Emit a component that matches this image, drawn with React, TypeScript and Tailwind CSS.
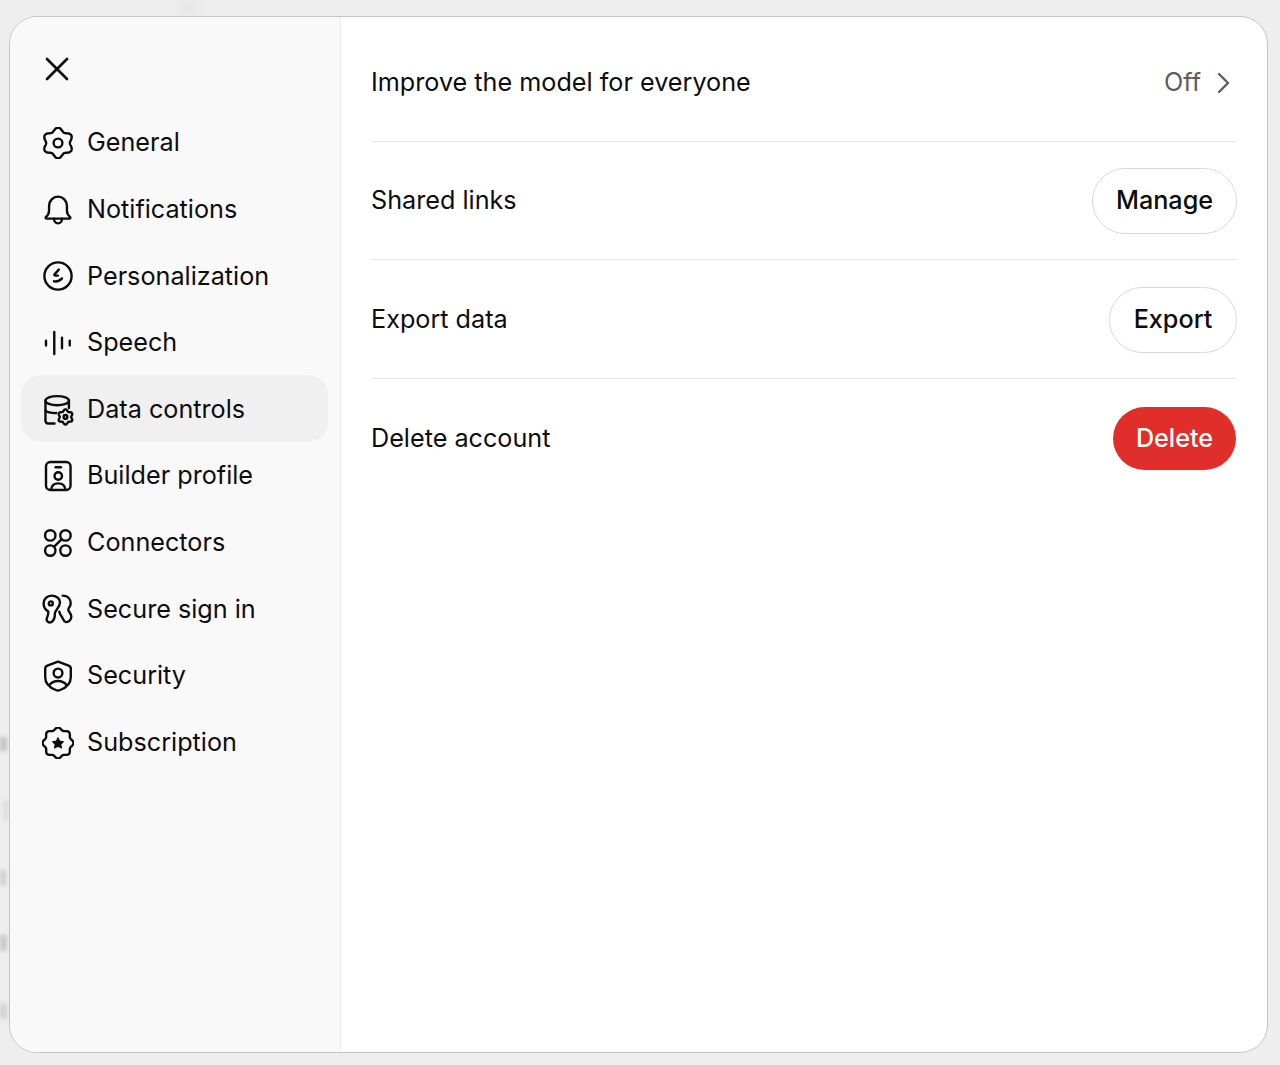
import React from "react";

function lobed(n: number, R: number, a: number, c = 12, phase = -Math.PI / 2) {
  const pts: string[] = [];
  const steps = 144;
  for (let i = 0; i < steps; i++) {
    const t = (i / steps) * Math.PI * 2;
    const r = R + a * Math.cos(n * t);
    const x = c + r * Math.cos(t + phase);
    const y = c + r * Math.sin(t + phase);
    pts.push(`${i ? "L" : "M"}${x.toFixed(2)} ${y.toFixed(2)}`);
  }
  return pts.join(" ") + " Z";
}

function Ico({ children, size = 32 }: { children: React.ReactNode; size?: number }) {
  return (
    <svg width={size} height={size} viewBox="0 0 24 24" fill="none" stroke="#0d0d0d" strokeWidth="1.8" strokeLinecap="round" strokeLinejoin="round" className="shrink-0">
      {children}
    </svg>
  );
}

const icons: Record<string, React.ReactNode> = {
  General: (
    <Ico>
      <path d={lobed(6, 10.2, 1.3)} />
      <circle cx="12" cy="12" r="3.3" />
    </Ico>
  ),
  Notifications: (
    <Ico>
      <path d="M3 17.2c1.500-1.200 2.300-2.800 2.300-4.800V9a6.700 7 0 0 1 13.400 0v3.400c0 2 .8 3.600 2.300 4.800.5.400.2 1.300-.5 1.300H3.500c-.7 0-1-.9-.5-1.300z" />
      <path d="M9 18.500c0 2 1.300 3.500 3 3.500s3-1.500 3-3.500" />
    </Ico>
  ),
  Personalization: (
    <Ico>
      <circle cx="12" cy="12" r="10.200" />
      <path d="M12.600 7.200 9.400 10.800c-.3.400 0 .9.500.9h2" />
      <path d="M9 16c1.900.3 4.300-.2 6-2.200" />
    </Ico>
  ),
  Speech: (
    <Ico>
      <path d="M3 10.200v3.600M9.200 3.800v16.400M15 8v8M20.800 10.200v3.600" />
    </Ico>
  ),
  "Data controls": (
    <Ico>
      <ellipse cx="11.400" cy="5" rx="8.800" ry="3.400" />
      <path d="M2.600 5v14.800c0 1.400 1 2.300 2.400 2.300h4.400" />
      <path d="M20.200 5v5.500M2.600 12.500c1.800 1.500 4.500 1.900 8 1.800" />
      <g transform="translate(17.600 17.200)">
        <path d={lobed(6, 5, 0.7, 0)} fill="#f0f0f0" />
        <circle r="1.400" />
      </g>
    </Ico>
  ),
  "Builder profile": (
    <Ico>
      <rect x="3" y="1.500" width="18.400" height="21" rx="3.200" />
      <path d="M10.200 5.400h4" />
      <circle cx="12.200" cy="12" r="2.800" />
      <path d="M6.800 22.200c.4-3 2.600-4.700 5.400-4.700s5 1.700 5.400 4.700" />
    </Ico>
  ),
  Connectors: (
    <Ico>
      <circle cx="6.200" cy="6.300" r="3.900" />
      <circle cx="17.600" cy="6.300" r="3.900" />
      <circle cx="6.200" cy="17.700" r="3.900" />
      <circle cx="17.600" cy="17.700" r="3.900" />
      <path d="M14.800 9.100 9 14.900" />
    </Ico>
  ),
  "Secure sign in": (
    <Ico>
      <path d="M7.200 2C3.800 2 1.200 4.600 1.200 8c0 2.500 1.400 4.500 3.500 5.800.5 3-1.500 4.500-1.200 6.500.3 1.500 2 2.200 3.400 1.600 2-1 2.800-3.500 2.800-6.900 0-2.200 3.800-3.800 3.800-8C13.500 4 10.600 2 7.200 2z" />
      <circle cx="6.600" cy="7.800" r="1.500" />
      <path d="M15.500 2c3.300 0 6 2 6 6 0 2-1.800 3-1.800 4.500 0 1.500 2.300 2.700 2.300 5.200 0 2.500-2 4.300-4 4.100-2-.3-2-2.500-3.400-4.300-.6-.8-1.200-1.800-1.600-3.500" />
    </Ico>
  ),
  Security: (
    <Ico>
      <path d="M12 1.200 20 4.200c1 .4 1.600 1.100 1.600 2.200v6.300c0 4.500-2.800 7.800-8 9.800-1 .4-2.200.4-3.200 0-5.200-2-8-5.300-8-9.800V6.400c0-1.100.6-1.800 1.600-2.200z" />
      <circle cx="12" cy="9.800" r="3.300" />
      <path d="M5.600 18.800c1.400-2 3.700-3.100 6.400-3.100s5 1.100 6.400 3.100" />
    </Ico>
  ),
  Subscription: (
    <Ico>
      <path d={lobed(8, 10.700, 0.9)} />
      <path d="M12 8 13.300 10.600 16.100 11 14.100 13 14.600 15.800 12 14.500 9.400 15.800 9.900 13 7.900 11 10.700 10.600Z" fill="#0d0d0d" strokeWidth="0.8" />
    </Ico>
  ),
};

const items = ["General", "Notifications", "Personalization", "Speech", "Data controls", "Builder profile", "Connectors", "Secure sign in", "Security", "Subscription"];

function Row({ label, children }: { label: string; children: React.ReactNode }) {
  return (
    <div className="flex items-center justify-between h-[118.500px] pt-[2px] border-b border-[#e6e6e6] last:border-b-0">
      <span className="text-[25.200px] text-[#0d0d0d]">{label}</span>
      {children}
    </div>
  );
}

export default function App() {
  return (
    <div className="relative w-[1280px] h-[1065px] bg-[#eeeeee] overflow-hidden pt-[16px] pl-[9px]" style={{ fontFamily: "Inter, 'Noto Sans', sans-serif" }}>
      <div className="absolute left-[180px] top-0 w-[20px] h-[16px] bg-[#e8e8e8] blur-[3px]" />
      <div className="absolute left-0 top-[737px] w-[7px] h-[14px] bg-[#c2c2c2] blur-[2px]" />
      <div className="absolute left-[4px] top-[800px] w-[4px] h-[20px] bg-[#d8d8d8] blur-[2px]" />
      <div className="absolute left-0 top-[870px] w-[6px] h-[16px] bg-[#cdcdcd] blur-[2px]" />
      <div className="absolute left-0 top-[935px] w-[7px] h-[16px] bg-[#c8c8c8] blur-[2px]" />
      <div className="absolute left-0 top-[1003px] w-[7px] h-[16px] bg-[#d2d2d2] blur-[2px]" />
      <div className="relative flex w-[1259px] h-[1037px] rounded-[28px] overflow-hidden border border-[#c4c4c4] bg-white">
        <aside className="w-[331px] shrink-0 bg-[#f9f9f9] border-r border-[#ececec] px-[11px]">
          <div className="h-[92px] flex items-center pl-[20px] pt-[11px]">
            <svg width="32" height="32" viewBox="0 0 24 24" fill="none" stroke="#0d0d0d" strokeWidth="2" strokeLinecap="round">
              <path d="M4.500 4.500 19.500 19.500M19.500 4.500 4.500 19.500" />
            </svg>
          </div>
          <nav className="flex flex-col">
            {items.map((it) => (
              <div key={it} className={`flex items-center h-[66.600px] w-[307px] pl-[21px] pt-[2px] gap-[13px] rounded-[20px] ${it === "Data controls" ? "bg-[#f0f0f0]" : ""}`}>
                {icons[it]}
                <span className="text-[25.200px] text-[#0d0d0d] whitespace-nowrap">{it}</span>
              </div>
            ))}
          </nav>
        </aside>
        <main className="flex-1 px-[30px] pt-[6px]">
          <Row label="Improve the model for everyone">
            <div className="flex items-center gap-[13px] pr-[3px]">
              <span className="text-[25.200px] text-[#5d5d5d]">Off</span>
              <svg width="20" height="26" viewBox="0 0 20 26" fill="none" stroke="#5d5d5d" strokeWidth="2.400" strokeLinecap="round" strokeLinejoin="round">
                <path d="M5 4 14 13 5 22" />
              </svg>
            </div>
          </Row>
          <Row label="Shared links">
            <button className="h-[66px] w-[145px] rounded-full border border-[#d9d9d9] text-[25.200px] font-medium text-[#0d0d0d] bg-white">Manage</button>
          </Row>
          <Row label="Export data">
            <button className="h-[66px] w-[128px] rounded-full border border-[#d9d9d9] text-[25.200px] font-medium text-[#0d0d0d] bg-white">Export</button>
          </Row>
          <Row label="Delete account">
            <button className="h-[63px] w-[123px] mr-[1px] rounded-full bg-[#e02e2a] text-[25.200px] font-medium text-white">Delete</button>
          </Row>
        </main>
      </div>
    </div>
  );
}
